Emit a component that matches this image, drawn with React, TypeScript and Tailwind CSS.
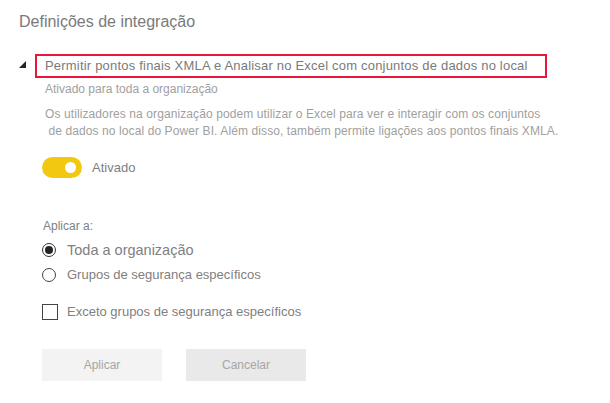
import React from "react";

const font = { fontFamily: '"Liberation Sans", Arial, sans-serif' };

export default function App() {
  return (
    <div
      className="h-[403px] w-[610px] bg-white pl-[19px] pt-[11px] text-[#605e5c]"
      style={font}
    >
      <h2 className="text-[16px] leading-[22px] text-[#7a7a7a]">Definições de integração</h2>

      <div className="mt-[21px] flex items-start">
        <svg width="7" height="7" viewBox="0 0 7 7" className="mt-[7px] shrink-0">
          <polygon points="7,0 7,7 0,7" fill="#252423" />
        </svg>
        <div className="ml-[9px]">
          <div className="flex h-[24px] w-[512px] items-center border-2 border-[#e8173a] pl-[8px] text-[13px] tracking-[0.2px] text-[#7a7a7a]">
            Permitir pontos finais XMLA e Analisar no Excel com conjuntos de dados no local
          </div>
        </div>
      </div>

      <div className="pl-[23px]">
        <p className="mt-[3px] pl-[3px] text-[12px] leading-[16px] text-[#a0a0a0]">Ativado para toda a organização</p>
        <p className="mt-[9px] pl-[3px] text-[12px] leading-[17px] tracking-[0.1px] text-[#a0a0a0]">
          Os utilizadores na organização podem utilizar o Excel para ver e interagir com os conjuntos
          <br />
          &nbsp;de dados no local do Power BI. Além disso, também permite ligações aos pontos finais XMLA.
        </p>

        <div className="mt-[17px] flex items-center">
          <div className="flex h-[21px] w-[40px] items-center justify-end rounded-full bg-[#f2c811] pr-[6px]">
            <div className="h-[11px] w-[11px] rounded-full bg-white" />
          </div>
          <span className="ml-[10px] text-[13px] text-[#808080]">Ativado</span>
        </div>

        <p className="mt-[40px] pl-[1px] text-[12px] leading-[16px] text-[#808080]">Aplicar a:</p>

        <div className="mt-[6px] flex items-center">
          <div className="flex h-[14px] w-[14px] items-center justify-center rounded-full border border-[#333]">
            <div className="h-[8px] w-[8px] rounded-full bg-[#252423]" />
          </div>
          <span className="ml-[11px] text-[14.5px] leading-[20px] text-[#808080]">Toda a organização</span>
        </div>
        <div className="mt-[5px] flex items-center">
          <div className="h-[14px] w-[14px] rounded-full border border-[#444]" />
          <span className="ml-[11px] text-[13px] leading-[20px] text-[#808080]">Grupos de segurança específicos</span>
        </div>

        <div className="mt-[17px] flex items-center">
          <div className="h-[16px] w-[16px] border border-[#444]" />
          <span className="ml-[9px] text-[13px] leading-[20px] text-[#808080]">Exceto grupos de segurança específicos</span>
        </div>

        <div className="mt-[27px] flex gap-[24px]">
          <button className="h-[32px] w-[120px] bg-[#f3f3f3] text-[12px] text-[#a6a6a6]">Aplicar</button>
          <button className="h-[32px] w-[120px] bg-[#e9e9e9] text-[12px] text-[#a6a6a6]">Cancelar</button>
        </div>
      </div>
    </div>
  );
}
